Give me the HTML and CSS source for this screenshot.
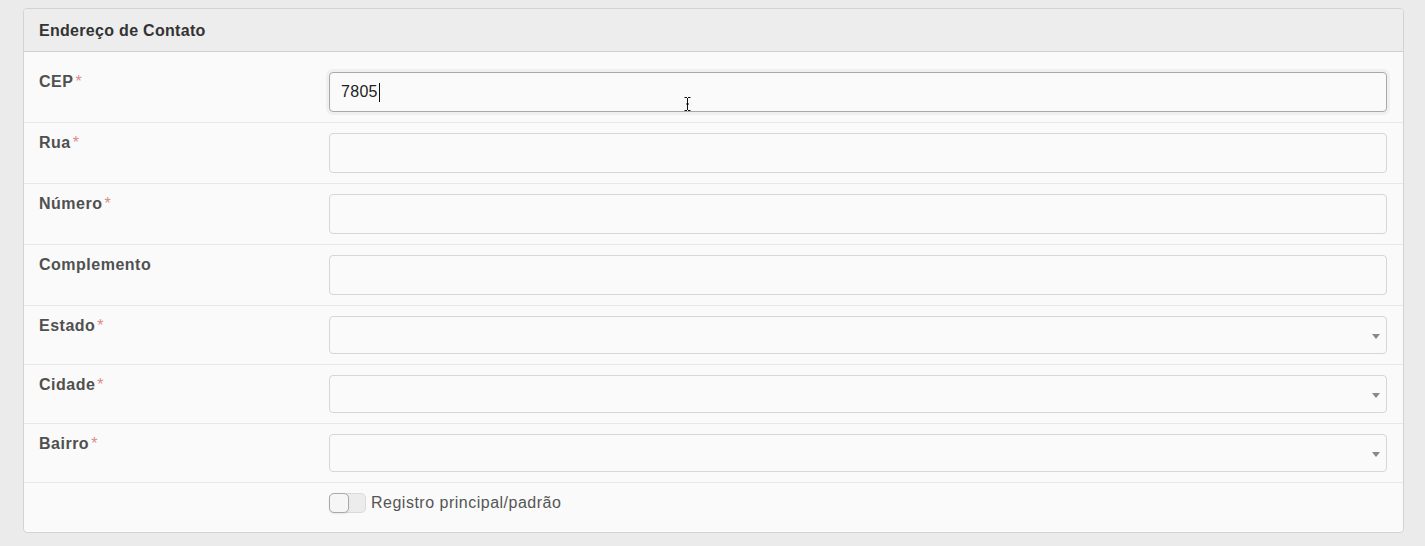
FILE: index.html
```html
<!DOCTYPE html>
<html lang="pt-BR">
<head>
<meta charset="utf-8">
<title>Endereço de Contato</title>
<link rel="stylesheet" href="styles.css">
</head>
<body>
<div class="panel">
  <div class="panel-heading">Endereço de Contato</div>
  <div class="panel-body">
    <div class="row row-first">
      <div class="label">CEP<span class="req">*</span></div>
      <div class="field">
        <div class="input focused"><span class="value">7805</span><span class="caret"></span>
          <svg class="ibeam" width="7" height="14" viewBox="0 0 7 14"><path d="M0.5 0.5h2.5M4 0.5h2.5M3.5 1v12M0.5 13.5h2.5M4 13.5h2.5M2 7h3" stroke="#111" stroke-width="1" fill="none"/></svg>
        </div>
      </div>
    </div>
    <div class="row">
      <div class="label">Rua<span class="req">*</span></div>
      <div class="field"><div class="input"></div></div>
    </div>
    <div class="row">
      <div class="label">Número<span class="req">*</span></div>
      <div class="field"><div class="input"></div></div>
    </div>
    <div class="row">
      <div class="label">Complemento</div>
      <div class="field"><div class="input"></div></div>
    </div>
    <div class="row">
      <div class="label">Estado<span class="req">*</span></div>
      <div class="field"><div class="select"><span class="arrow"></span></div></div>
    </div>
    <div class="row">
      <div class="label">Cidade<span class="req">*</span></div>
      <div class="field"><div class="select"><span class="arrow"></span></div></div>
    </div>
    <div class="row">
      <div class="label">Bairro<span class="req">*</span></div>
      <div class="field"><div class="select"><span class="arrow"></span></div></div>
    </div>
    <div class="row row-last">
      <div class="label"></div>
      <div class="field toggle-field">
        <span class="toggle"><span class="knob"></span></span>
        <span class="toggle-text">Registro principal/padrão</span>
      </div>
    </div>
  </div>
</div>
</body>
</html>
```

FILE: styles.css
```css
* { box-sizing: border-box; }

html, body {
  margin: 0;
  background: #ebebeb;
}

body {
  padding: 8px 21px 0 23px;
  font-family: "Liberation Sans", Arial, sans-serif;
  font-size: 16px;
  color: #555;
}

.panel {
  width: 1381px;
  height: 525px;
  border: 1px solid #d3d3d3;
  border-radius: 4px;
  background: #fafafa;
  overflow: hidden;
}

.panel-heading {
  height: 43px;
  line-height: 44px;
  padding: 0 15px;
  background: #ededed;
  border-bottom: 1px solid #d0d0d0;
  color: #333;
  font-weight: bold;
  letter-spacing: 0.3px;
}

.panel-body {
  padding-top: 10px;
}

.row {
  display: grid;
  grid-template-columns: 305px 1fr;
  padding: 10px 16px 10px 0;
  border-bottom: 1px solid #e8e8e8;
}

.row-last {
  border-bottom: none;
  padding-top: 9px;
  padding-bottom: 0;
}

.label {
  padding-left: 15px;
  padding-top: 1px;
  line-height: 18px;
  font-weight: bold;
  letter-spacing: 0.5px;
  color: #505050;
}

.req {
  color: #dc8a8a;
  font-weight: normal;
  margin-left: 2px;
}

.input {
  position: relative;
  height: 40px;
  border: 1px solid #d6d6d6;
  border-radius: 4px;
  background: #fafafa;
  display: flex;
  align-items: center;
  padding-left: 11px;
  color: #222;
  letter-spacing: 0.3px;
}

.input.focused {
  border-color: #a8a8a8;
  box-shadow: 0 0 0 3px #f0f0f0;
}

.caret {
  display: inline-block;
  width: 1px;
  height: 19px;
  background: #111;
  margin-left: 1px;
}

.ibeam {
  position: absolute;
  left: 354px;
  top: 24px;
}

.select {
  height: 38px;
  border: 1px solid #d6d6d6;
  border-radius: 4px;
  background: #fafafa;
  display: flex;
  align-items: center;
  justify-content: flex-end;
  padding-right: 6px;
  padding-top: 3px;
}

.arrow {
  width: 0;
  height: 0;
  border-left: 4px solid transparent;
  border-right: 4px solid transparent;
  border-top: 5px solid #888;
}

.toggle-field {
  display: flex;
  align-items: center;
  height: 21px;
}

.toggle {
  display: flex;
  width: 37px;
  height: 20px;
  border: 1px solid #dadada;
  border-radius: 5px;
  background: #ececec;
}

.knob {
  width: 20px;
  height: 20px;
  margin: -1px 0 0 -1px;
  border: 1px solid #a9a9a9;
  border-radius: 5px;
  background: #f6f6f6;
  box-shadow: 0 1px 2px rgba(0,0,0,0.08);
}

.toggle-text {
  margin-left: 5px;
  font-size: 16px;
  letter-spacing: 0.5px;
  color: #555;
}
```
